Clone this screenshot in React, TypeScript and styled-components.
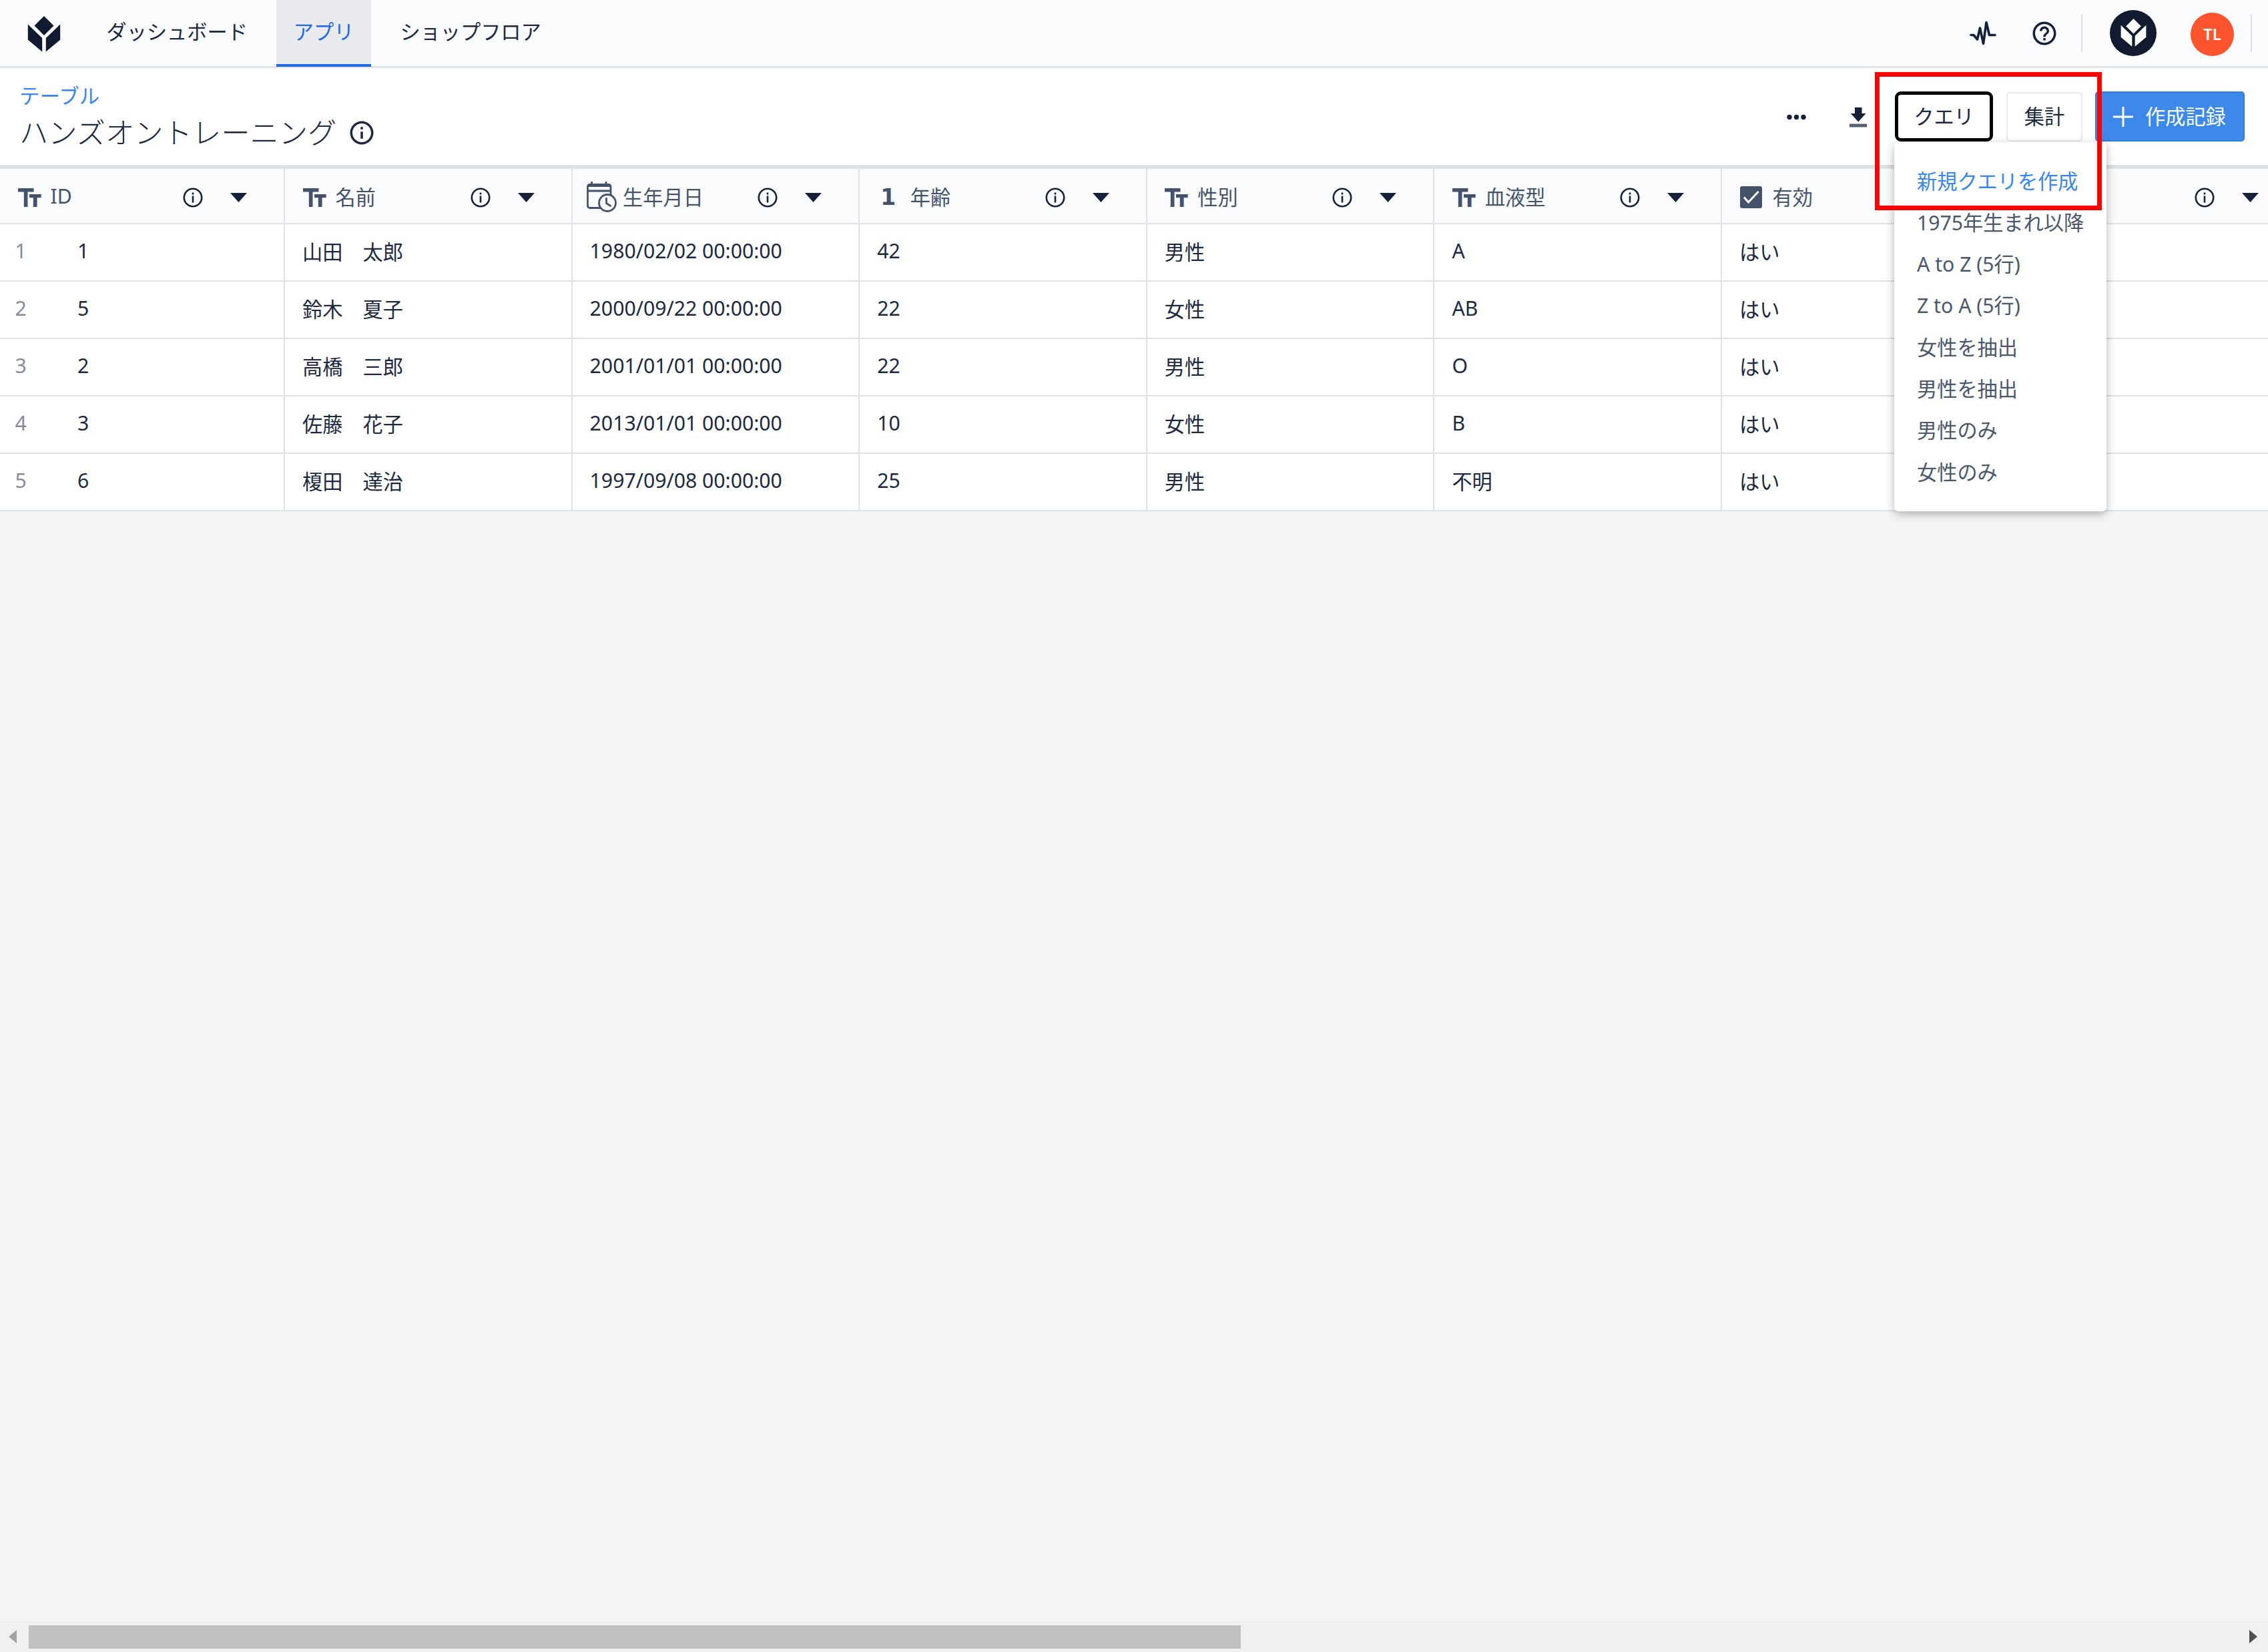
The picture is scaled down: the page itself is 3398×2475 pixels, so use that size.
import React, { useState } from 'react';
import styled, { createGlobalStyle } from 'styled-components';
import { MdHelpOutline, MdInfoOutline } from 'react-icons/md';

const GlobalStyle = createGlobalStyle`
  * {
    box-sizing: border-box;
  }
  body {
    margin: 0;
    overflow: hidden;
    background: #f3f5f7;
    font-family: 'Noto Sans', 'Noto Sans CJK JP', sans-serif;
    font-size: 30.2px;
    color: #1c2940;
  }
  svg {
    display: block;
    flex-shrink: 0;
  }
`;

const Page = styled.div`
  position: relative;
  display: flex;
  flex-direction: column;
  width: 3398px;
  height: 2475px;
  overflow: hidden;
`;

const NavBar = styled.nav`
  display: flex;
  justify-content: space-between;
  height: 102px;
  background: #fafbfd;
  border-bottom: 3px solid #e0e2e6;
`;

const NavLeft = styled.div`
  display: flex;
  padding-left: 41px;
`;

const NavRight = styled.div`
  display: flex;
  align-items: center;
  height: 99px;
  padding-right: 24px;
`;

const LogoLink = styled.a`
  margin: 24px 43px 0 0;
`;

const NavTab = styled.a<{ $active?: boolean }>`
  display: flex;
  align-items: center;
  height: 100px;
  margin-right: 17.5px;
  padding: 0 26px 8px 25.5px;
  white-space: nowrap;
  color: ${(p) => (p.$active ? '#1f6ae6' : '#1c2940')};
  background: ${(p) => (p.$active ? '#e9eaee' : 'transparent')};
  box-shadow: ${(p) => (p.$active ? 'inset 0 -4px 0 #1f6ae0' : 'none')};
`;

const Divider = styled.span`
  width: 2px;
  height: 57px;
  background: #dcdfe4;
`;

const Workspace = styled.div`
  display: flex;
  align-items: center;
  justify-content: center;
  width: 70px;
  height: 69px;
  margin: 0 51px 0 41px;
  border-radius: 50%;
  background: #111a2e;
`;

const Avatar = styled.div`
  display: flex;
  align-items: center;
  justify-content: center;
  width: 65px;
  height: 65px;
  margin: 3px 25px 0 0;
  padding-bottom: 2px;
  border-radius: 50%;
  background: #ff552e;
  color: #fff;
  font-size: 24px;
  font-weight: 600;
`;

const Header = styled.header`
  display: flex;
  justify-content: space-between;
  height: 151px;
  padding: 0 35px 0 29px;
  background: #fff;
  border-bottom: 6px solid #dee0e4;
`;

const Breadcrumb = styled.a`
  display: block;
  margin-top: 20px;
  line-height: 42px;
  font-size: 30.5px;
  color: #3b86ea;
`;

const Title = styled.h1`
  display: flex;
  align-items: center;
  gap: 17px;
  margin: 5px 0 0;
  line-height: 60px;
  font-size: 43.3px;
  font-weight: 300;
`;

const Actions = styled.div`
  display: flex;
  align-items: center;
  height: 75px;
  margin-top: 35px;
`;

const IconButton = styled.button<{ $gap: number }>`
  margin: 2px ${(p) => p.$gap}px 0 0;
  padding: 0;
  border: none;
  background: none;
`;

const QueryWrap = styled.div`
  position: relative;
  margin-right: 20px;
`;

const Button = styled.button<{ $focused?: boolean; $width: number }>`
  display: flex;
  align-items: center;
  justify-content: center;
  width: ${(p) => p.$width}px;
  height: ${(p) => (p.$focused ? 75 : 74)}px;
  padding: 0 0 4px;
  border: ${(p) => (p.$focused ? '5px solid #000' : '2px solid #e8e9eb')};
  border-radius: ${(p) => (p.$focused ? 9 : 5)}px;
  background: #fff;
  color: #1c2940;
  font: inherit;
`;

const CreateButton = styled.button`
  display: flex;
  align-items: center;
  gap: 18px;
  width: 224px;
  height: 75px;
  margin-left: 19px;
  padding: 0 0 0 25px;
  border: 2px solid #327cdc;
  border-radius: 5px;
  background: #3c89ea;
  color: #fff;
  font: inherit;

  span {
    padding-bottom: 4px;
  }
`;

const Menu = styled.ul`
  position: absolute;
  z-index: 2;
  top: 76px;
  left: -1px;
  width: 318px;
  height: 553px;
  margin: 0;
  padding: 28.5px 0 0 34px;
  list-style: none;
  border-radius: 6px;
  background: #fff;
  box-shadow: 0 4px 14px rgba(0, 0, 0, 0.3);
`;

const MenuItem = styled.li<{ $primary?: boolean }>`
  height: 62.3px;
  line-height: 60px;
  white-space: nowrap;
  color: ${(p) => (p.$primary ? '#3b86ea' : '#4b586c')};
`;

const Highlight = styled.div`
  position: absolute;
  z-index: 3;
  top: 108px;
  left: 2809px;
  width: 340px;
  height: 207px;
  border: 7px solid #ff0000;
`;

const Table = styled.div`
  flex: 1;
`;

const TableRow = styled.div<{ $head?: boolean }>`
  display: grid;
  grid-template-columns: 427px repeat(7, 430.6px);
  height: ${(p) => (p.$head ? 83 : 86)}px;
  background: ${(p) => (p.$head ? '#fafbfd' : '#fff')};
  border-bottom: 2px solid #dfe1e5;
`;

const HeadCell = styled.div`
  display: flex;
  align-items: center;
  padding: 4px 55px 0 22px;
  border-right: 2px solid #dfe1e5;
  color: #44536b;
`;

const TypeSlot = styled.span`
  display: flex;
  align-items: center;
  justify-content: center;
  width: 44px;
  height: 50px;
  margin-right: 9.5px;
  color: #44536b;
`;

const NumberMark = styled.b`
  padding-right: 3px;
  font-family: 'DejaVu Sans', sans-serif;
  font-size: 33px;
  line-height: 1;
`;

const HeadLabel = styled.span`
  flex: 1;
  padding-bottom: 4px;
  white-space: nowrap;
`;

const HeadIcons = styled.span`
  display: flex;
  align-items: center;
  gap: 41px;
  color: #15203a;
`;

const Cell = styled.div`
  display: flex;
  align-items: center;
  padding: 0 0 5px 26px;
  border-right: 2px solid #dfe1e5;
  white-space: pre;
`;

const RowNumber = styled.span`
  width: 93.5px;
  margin-left: -3.5px;
  color: #858c99;
`;

const ScrollTrack = styled.div`
  display: flex;
  align-items: center;
  height: 46px;
  padding: 0 16px 0 13px;
  background: #f0f0f0;
`;

const ScrollThumb = styled.div`
  width: 1816px;
  height: 35px;
  margin: 0 auto 0 18px;
  background: #c0c0c0;
`;

const TulipLogo = ({ width, color }: { width: number; color: string }) => (
  <svg width={width} height={width * 1.1} viewBox="0 0 50 55" fill={color}>
    <path d="M25 0 39.5 14.5 25 29 10.5 14.5Z" />
    <path d="M.8 12.5 22.2 33V53.5L.8 35.5Z" />
    <path d="M49.2 12.5 27.8 33V53.5L49.2 35.5Z" />
  </svg>
);

const PulseIcon = () => (
  <svg width="40" height="37" viewBox="0 0 40 37" fill="none" stroke="#15203a" strokeWidth="3.6" strokeLinejoin="round" strokeLinecap="round">
    <path d="M2 21.5H6L11.5 28 15.5 11 20.5 34.5 25 2.5 29.5 21.5H38" />
  </svg>
);

const DotsIcon = () => (
  <svg width="29" height="9" viewBox="0 0 29 9" fill="#15203a">
    <circle cx="4" cy="4.5" r="3.7" />
    <circle cx="14.5" cy="4.5" r="3.7" />
    <circle cx="25" cy="4.5" r="3.7" />
  </svg>
);

const DownloadIcon = () => (
  <svg width="26" height="30" viewBox="0 0 26 30">
    <path d="M8 0H18.500V9H24.500L13.200 21.500 1.800 9H8Z" fill="#15203a" />
    <path d="M0 24.500H26V29.500H0Z" fill="#566073" />
  </svg>
);

const PlusIcon = () => (
  <svg width="30" height="30" viewBox="0 0 30 30" stroke="#fff" strokeWidth="3">
    <path d="M15 0V30M0 15H30" />
  </svg>
);

const TextTypeIcon = () => (
  <svg width="35" height="28" viewBox="0 0 35 28" fill="currentColor">
    <rect x="0" y="0" width="23.500" height="5.500" />
    <rect x="8.800" y="0" width="5.700" height="28" />
    <rect x="17" y="9" width="17.700" height="5.200" />
    <rect x="22.800" y="9" width="5.800" height="19" />
  </svg>
);

const DateTypeIcon = () => (
  <svg width="45" height="47" viewBox="0 0 45 47" fill="none" stroke="currentColor" strokeWidth="2.8">
    <rect x="1.500" y="4.500" width="34.500" height="35" rx="3" />
    <path d="M1.500 6H36" strokeWidth="4" />
    <path d="M1.500 14H36M7.500 0V5M29 0V5" />
    <circle cx="31" cy="32" r="12.500" fill="#fafbfd" />
    <path d="M29.500 24V32.500L36.500 37" />
  </svg>
);

const BoolTypeIcon = () => (
  <svg width="33" height="33" viewBox="0 0 33 33">
    <rect width="33" height="33" rx="3" fill="#44536b" />
    <path d="M6 16.500 12.500 24 27.500 8" fill="none" stroke="#fff" strokeWidth="3" />
  </svg>
);

const InfoIcon = () => (
  <svg width="30" height="30" viewBox="0 0 30 30" fill="none" stroke="#15203a">
    <circle cx="15" cy="15" r="13.200" strokeWidth="2.600" />
    <path d="M15 7.500V10.500M15 12.500V22.500" strokeWidth="2.600" />
  </svg>
);

const Caret = () => (
  <svg width="25" height="14" viewBox="0 0 25 14" fill="#15203a">
    <path d="M0 0H25L12.500 14Z" />
  </svg>
);

type ColumnType = 'text' | 'date' | 'number' | 'bool';

const TypeIcon = ({ type }: { type: ColumnType }) => {
  switch (type) {
    case 'date':
      return <DateTypeIcon />;
    case 'number':
      return <NumberMark>1</NumberMark>;
    case 'bool':
      return <BoolTypeIcon />;
    default:
      return <TextTypeIcon />;
  }
};

const columns: { label: string; type: ColumnType }[] = [
  { label: 'ID', type: 'text' },
  { label: '名前', type: 'text' },
  { label: '生年月日', type: 'date' },
  { label: '年齢', type: 'number' },
  { label: '性別', type: 'text' },
  { label: '血液型', type: 'text' },
  { label: '有効', type: 'bool' },
];

const records = [
  ['1', '山田　太郎', '1980/02/02 00:00:00', '42', '男性', 'A', 'はい'],
  ['5', '鈴木　夏子', '2000/09/22 00:00:00', '22', '女性', 'AB', 'はい'],
  ['2', '高橋　三郎', '2001/01/01 00:00:00', '22', '男性', 'O', 'はい'],
  ['3', '佐藤　花子', '2013/01/01 00:00:00', '10', '女性', 'B', 'はい'],
  ['6', '榎田　達治', '1997/09/08 00:00:00', '25', '男性', '不明', 'はい'],
];

const queries = [
  '1975年生まれ以降',
  'A to Z (5行)',
  'Z to A (5行)',
  '女性を抽出',
  '男性を抽出',
  '男性のみ',
  '女性のみ',
];

const HelpSlot = styled.span`
  margin: 0 34px 0 51px;
  color: #15203a;
`;

function App() {
  const [menuOpen, setMenuOpen] = useState(true);

  return (
    <Page>
      <GlobalStyle />
      <NavBar>
        <NavLeft>
          <LogoLink>
            <TulipLogo width={50} color="#111a2e" />
          </LogoLink>
          <NavTab>ダッシュボード</NavTab>
          <NavTab $active>アプリ</NavTab>
          <NavTab>ショップフロア</NavTab>
        </NavLeft>
        <NavRight>
          <PulseIcon />
          <HelpSlot>
            <MdHelpOutline size={42} />
          </HelpSlot>
          <Divider />
          <Workspace>
            <TulipLogo width={39} color="#fff" />
          </Workspace>
          <Avatar>TL</Avatar>
          <Divider />
        </NavRight>
      </NavBar>

      <Header>
        <div>
          <Breadcrumb>テーブル</Breadcrumb>
          <Title>
            ハンズオントレーニング
            <MdInfoOutline size={42} />
          </Title>
        </div>
        <Actions>
          <IconButton $gap={65}>
            <DotsIcon />
          </IconButton>
          <IconButton $gap={42}>
            <DownloadIcon />
          </IconButton>
          <QueryWrap>
            <Button $focused $width={147} onClick={() => setMenuOpen(!menuOpen)}>クエリ</Button>
            {menuOpen && (
              <Menu>
                <MenuItem $primary>新規クエリを作成</MenuItem>
                {queries.map((q) => (
                  <MenuItem key={q}>{q}</MenuItem>
                ))}
              </Menu>
            )}
          </QueryWrap>
          <Button $width={114}>集計</Button>
          <CreateButton>
            <PlusIcon />
            <span>作成記録</span>
          </CreateButton>
        </Actions>
      </Header>

      <Table>
        <TableRow $head>
          {columns.map((col) => (
            <HeadCell key={col.label}>
              <TypeSlot>
                <TypeIcon type={col.type} />
              </TypeSlot>
              <HeadLabel>{col.label}</HeadLabel>
              <HeadIcons>
                <InfoIcon />
                <Caret />
              </HeadIcons>
            </HeadCell>
          ))}
          <HeadCell>
            <TypeSlot />
            <HeadLabel />
            <HeadIcons>
              <InfoIcon />
              <Caret />
            </HeadIcons>
          </HeadCell>
        </TableRow>
        {records.map((record, i) => (
          <TableRow key={record[0]}>
            {record.map((value, j) => (
              <Cell key={j}>
                {j === 0 && <RowNumber>{i + 1}</RowNumber>}
                {value}
              </Cell>
            ))}
            <Cell />
          </TableRow>
        ))}
      </Table>

      <ScrollTrack>
        <svg width="12" height="20" viewBox="0 0 12 20">
          <path d="M12 0V20L0 10Z" fill="#a3a3a3" />
        </svg>
        <ScrollThumb />
        <svg width="12" height="20" viewBox="0 0 12 20">
          <path d="M0 0V20L12 10Z" fill="#505050" />
        </svg>
      </ScrollTrack>

      <Highlight />
    </Page>
  );
}

export default App;
